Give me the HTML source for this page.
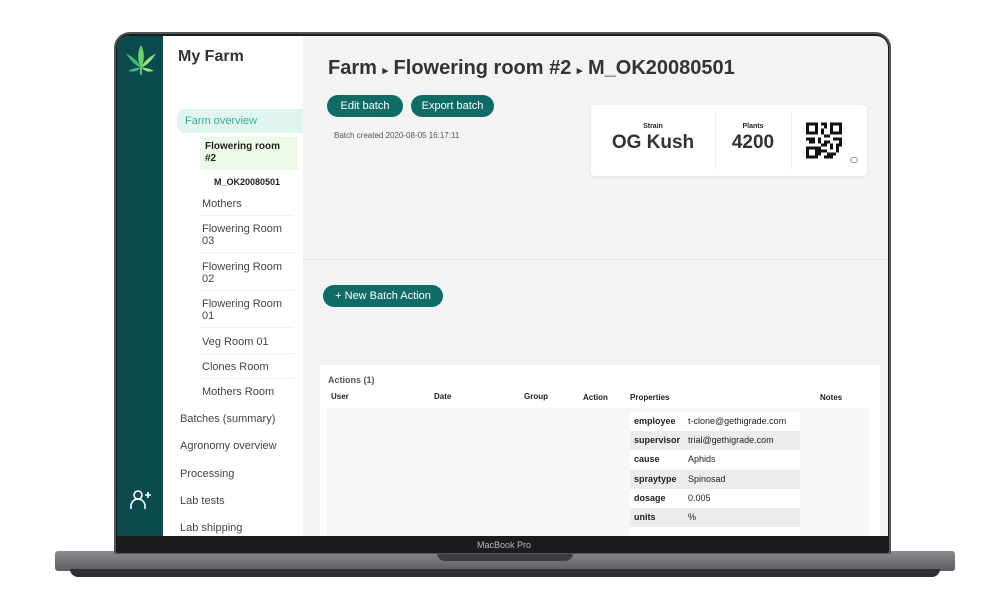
<!DOCTYPE html><html><head><style>
*{margin:0;padding:0;box-sizing:border-box}
body{width:1008px;height:612px;background:#fff;position:relative;overflow:hidden;font-family:"Liberation Sans",sans-serif;color:#222}
.a{position:absolute}
.nav{font-size:11px;color:#444}
.btn{position:absolute;background:#0f6b66;color:#fff;border-radius:12px;font-size:11px;text-align:center;line-height:22px}
.pr{position:absolute;left:630px;width:170px;height:19px;font-size:9px;line-height:19px}
.pr b{display:inline-block;width:58px;padding-left:4px}
</style></head><body>
<div class="a" style="left:55px;top:551px;width:900px;height:20px;background:linear-gradient(#8a8b8e,#5b5c60);border-radius:3px"></div>
<div class="a" style="left:70px;top:569px;width:870px;height:8px;background:#2e2f33;border-radius:0 0 40px 40px"></div>
<div class="a" style="left:437px;top:551px;width:136px;height:10px;background:#3d3e42;border-radius:0 0 8px 8px"></div>
<div class="a" style="left:114px;top:32px;width:777px;height:522px;background:#1c1c1e;border-radius:16px 16px 0 0;border:2px solid #555"></div>
<div class="a" style="left:117px;top:36px;width:771px;height:500px;background:#f3f3f3;border-radius:12px 12px 0 0;overflow:hidden">
 <div class="a" style="left:0;top:0;width:46px;height:500px;background:#0b4a4e"></div>
 <svg class="a" style="left:8px;top:8px" width="32" height="34" viewBox="0 0 30 32"><g><path d="M15 1C11 8 12 17 15 22C18 17 19 8 15 1Z" fill="#6fd36a"/><path d="M1 9C6 17 11 21 15 22C12 16 7 12 1 9Z" fill="#3fbf7a"/><path d="M29 9C24 17 19 21 15 22C18 16 23 12 29 9Z" fill="#9fe07a"/><path d="M3 25C8 23 12 22 15 22C11 26 7 27 3 25Z" fill="#3fbf7a"/><path d="M27 25C22 23 18 22 15 22C19 26 23 27 27 25Z" fill="#9fe07a"/><rect x="14" y="22" width="2" height="7" fill="#4cc76a"/></g></svg>
 <svg class="a" style="left:12px;top:452px" width="24" height="24" viewBox="0 0 24 24" fill="none" stroke="#fff" stroke-width="1.6"><circle cx="9" cy="7" r="4"/><path d="M2 21v-3a7 7 0 0 1 14 0v3"/><path d="M19 4v6M16 7h6"/></svg>
 <div class="a" style="left:46px;top:0;width:140px;height:500px;background:#fff"></div>
 <div class="a" style="left:61px;top:12px;font-size:16px;font-weight:bold;color:#333">My Farm</div>
 <div class="a" style="left:60px;top:73px;width:126px;height:24px;background:#e0f5f0;border-radius:8px 0 0 8px"></div>
 <div class="a nav" style="left:68px;top:79px;color:#3aa89a">Farm overview</div>
 <div class="a" style="left:83px;top:101px;width:98px;height:33px;background:#eefae8"></div>
 <div class="a" style="left:88px;top:105px;font-size:10px;font-weight:bold;line-height:12px">Flowering room<br>#2</div>
 <div class="a" style="left:97px;top:141px;font-size:9px;font-weight:bold">M_OK20080501</div>
 <div class="a nav" style="left:85px;top:162px">Mothers</div>
 <div class="a nav" style="left:85px;top:187px;line-height:12px">Flowering Room<br>03</div>
 <div class="a nav" style="left:85px;top:225px;line-height:12px">Flowering Room<br>02</div>
 <div class="a nav" style="left:85px;top:262px;line-height:12px">Flowering Room<br>01</div>
 <div class="a nav" style="left:85px;top:300px">Veg Room 01</div>
 <div class="a nav" style="left:85px;top:325px">Clones Room</div>
 <div class="a nav" style="left:85px;top:350px">Mothers Room</div>
 <div class="a" style="left:83px;top:179px;width:94px;border-top:1px solid #eee"></div>
 <div class="a" style="left:83px;top:216px;width:94px;border-top:1px solid #eee"></div>
 <div class="a" style="left:83px;top:254px;width:94px;border-top:1px solid #eee"></div>
 <div class="a" style="left:83px;top:291px;width:94px;border-top:1px solid #eee"></div>
 <div class="a" style="left:83px;top:317px;width:94px;border-top:1px solid #eee"></div>
 <div class="a" style="left:83px;top:342px;width:94px;border-top:1px solid #eee"></div>
 <div class="a nav" style="left:63px;top:377px">Batches (summary)</div>
 <div class="a nav" style="left:63px;top:404px">Agronomy overview</div>
 <div class="a nav" style="left:63px;top:432px">Processing</div>
 <div class="a nav" style="left:63px;top:459px">Lab tests</div>
 <div class="a nav" style="left:63px;top:486px">Lab shipping</div>
 <div class="a" style="left:211px;top:21px;font-size:20px;font-weight:bold;color:#333">Farm <span style="font-size:11px">▸</span> Flowering room #2 <span style="font-size:11px">▸</span> M_OK20080501</div>
 <div class="btn" style="left:210px;top:59px;width:76px">Edit batch</div>
 <div class="btn" style="left:294px;top:59px;width:83px">Export batch</div>
 <div class="a" style="left:217px;top:95px;font-size:8px;color:#555">Batch created 2020-08-05 16:17:11</div>
 <div class="a" style="left:474px;top:69px;width:276px;height:71px;background:#fff;border-radius:4px;box-shadow:0 1px 3px rgba(0,0,0,.08)"></div>
 <div class="a" style="left:598px;top:74px;height:60px;border-left:1px solid #f0f0f0"></div>
 <div class="a" style="left:674px;top:74px;height:60px;border-left:1px solid #f0f0f0"></div>
 <div class="a" style="left:474px;top:87px;width:124px;text-align:center;font-size:7px;font-weight:bold">Strain</div>
 <div class="a" style="left:474px;top:96px;width:124px;text-align:center;font-size:19px;font-weight:bold;color:#333">OG Kush</div>
 <div class="a" style="left:598px;top:87px;width:76px;text-align:center;font-size:7px;font-weight:bold">Plants</div>
 <div class="a" style="left:598px;top:96px;width:76px;text-align:center;font-size:19px;font-weight:bold;color:#333">4200</div>
 <svg class="a" style="left:689px;top:86px" width="36" height="37" viewBox="0 0 12 12"><g fill="#111"><path d="M0 0h4v4h-4zM1 1v2h2v-2zM8 0h4v4h-4zM9 1v2h2v-2zM0 8h4v4h-4zM1 9v2h2v-2z" fill-rule="evenodd"/><rect x="5" y="0" width="2" height="1"/><rect x="5" y="2" width="1" height="2"/><rect x="6" y="1" width="1" height="1"/><rect x="6" y="4" width="2" height="1"/><rect x="0" y="5" width="3" height="1"/><rect x="4" y="5" width="1" height="2"/><rect x="9" y="5" width="3" height="1"/><rect x="1" y="6" width="2" height="1"/><rect x="6" y="6" width="2" height="1"/><rect x="5" y="7" width="2" height="1"/><rect x="8" y="7" width="1" height="2"/><rect x="10" y="7" width="1" height="3"/><rect x="11" y="6" width="1" height="2"/><rect x="5" y="9" width="2" height="1"/><rect x="7" y="10" width="2" height="1"/><rect x="6" y="11" width="3" height="1"/><rect x="4" y="8" width="1" height="3"/><rect x="9" y="10" width="1" height="1"/></g></svg>
 <div class="a" style="left:733px;top:121px;width:8px;height:6px;border:1px solid #999;border-radius:3px"></div>
 <div class="a" style="left:186px;top:223px;width:585px;border-top:1px solid #e2e2e2"></div>
 <div class="btn" style="left:206px;top:249px;width:120px;height:22px;font-size:11px">+ New Batch Action</div>
 <div class="a" style="left:203px;top:329px;width:560px;height:171px;background:#fff"></div>
 <div class="a" style="left:211px;top:339px;font-size:9px;font-weight:bold;color:#555">Actions (1)</div>
 <div class="a" style="left:214px;top:356px;font-size:8px;font-weight:bold">User</div>
 <div class="a" style="left:317px;top:356px;font-size:8px;font-weight:bold">Date</div>
 <div class="a" style="left:407px;top:356px;font-size:8px;font-weight:bold">Group</div>
 <div class="a" style="left:466px;top:357px;font-size:8px;font-weight:bold">Action</div>
 <div class="a" style="left:513px;top:357px;font-size:8px;font-weight:bold">Properties</div>
 <div class="a" style="left:703px;top:357px;font-size:8px;font-weight:bold">Notes</div>
 <div class="a" style="left:210px;top:372px;width:543px;height:128px;background:#f7f7f7"></div>
</div>
<div class="pr" style="top:412px;background:#fff"><b>employee</b>t-clone@gethigrade.com</div>
<div class="pr" style="top:431px;background:#ececec"><b>supervisor</b>trial@gethigrade.com</div>
<div class="pr" style="top:450px;background:#fff"><b>cause</b>Aphids</div>
<div class="pr" style="top:470px;background:#ececec"><b>spraytype</b>Spinosad</div>
<div class="pr" style="top:489px;background:#fff"><b>dosage</b>0.005</div>
<div class="pr" style="top:508px;background:#ececec"><b>units</b>%</div>
<div class="pr" style="top:527px;height:9px;background:#fff"></div>
<div class="a" style="left:117px;top:536px;width:771px;height:17px;background:#1c1c1e"></div>
<div class="a" style="left:0;top:540px;width:1008px;text-align:center;font-size:9px;color:#bbb">MacBook Pro</div>
</body></html>
